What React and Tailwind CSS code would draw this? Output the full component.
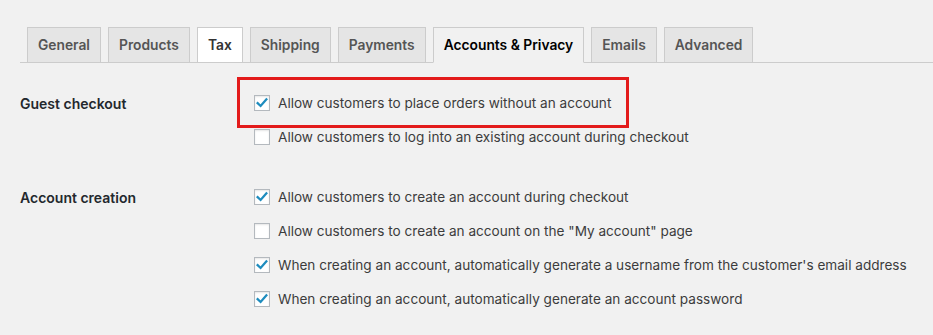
import React from 'react';

const tabs = [
  { label: 'General' },
  { label: 'Products' },
  { label: 'Tax', hover: true },
  { label: 'Shipping' },
  { label: 'Payments' },
  { label: 'Accounts & Privacy', active: true },
  { label: 'Emails' },
  { label: 'Advanced' },
];

const Checkbox = ({ checked }) => (
  <span className="flex h-[16px] w-[16px] shrink-0 items-center justify-center border border-[#b4b9be] bg-white shadow-[inset_0_1px_2px_rgba(0,0,0,0.1)]">
    {checked && (
      <svg viewBox="0 0 16 16" className="h-[14px] w-[14px]">
        <path d="M3 8.2 L6.4 11.4 L13 3.8" fill="none" stroke="#1e8cbe" strokeWidth="2.6" strokeLinecap="square" strokeLinejoin="miter" />
      </svg>
    )}
  </span>
);

const Option = ({ checked, children, highlight }) => (
  <div className="relative flex h-[34px] items-center gap-[8px]">
    {highlight && (
      <div className="pointer-events-none absolute -left-[17px] -top-[9px] h-[51px] w-[392px] border-[3px] border-[#e31b1b]" />
    )}
    <Checkbox checked={checked} />
    <span className="whitespace-nowrap text-[13.6px] text-[#3c3c3c]">{children}</span>
  </div>
);

const Section = ({ title, className, children }) => (
  <div className={`flex px-[20px] ${className}`}>
    <div className="flex h-[34px] w-[234px] shrink-0 items-center text-[14px] font-semibold text-[#23282d]">
      {title}
    </div>
    <div className="flex flex-col">{children}</div>
  </div>
);

export default function App() {
  return (
    <div className="min-h-screen bg-[#f1f1f1] pt-[27px] font-['Inter',sans-serif]">
      <nav className="ml-[20px] flex gap-[7px] border-b border-[#ccc] pl-[7px]">
        {tabs.map((t) => (
          <a
            key={t.label}
            className={`-mb-px flex h-[36px] items-center border border-[#ccc] px-[10px] text-[13.8px] font-semibold ${
              t.active
                ? 'border-b-[#f1f1f1] bg-[#f1f1f1] text-black'
                : t.hover
                ? 'bg-white text-[#333]'
                : 'bg-[#e5e5e5] text-[#555]'
            }`}
          >
            {t.label}
          </a>
        ))}
      </nav>

      <Section title="Guest checkout" className="mt-[23px]">
        <Option checked highlight>Allow customers to place orders without an account</Option>
        <Option>Allow customers to log into an existing account during checkout</Option>
      </Section>

      <Section title="Account creation" className="mt-[26px]">
        <Option checked>Allow customers to create an account during checkout</Option>
        <Option>Allow customers to create an account on the "My account" page</Option>
        <Option checked>When creating an account, automatically generate a username from the customer's email address</Option>
        <Option checked>When creating an account, automatically generate an account password</Option>
      </Section>
    </div>
  );
}
